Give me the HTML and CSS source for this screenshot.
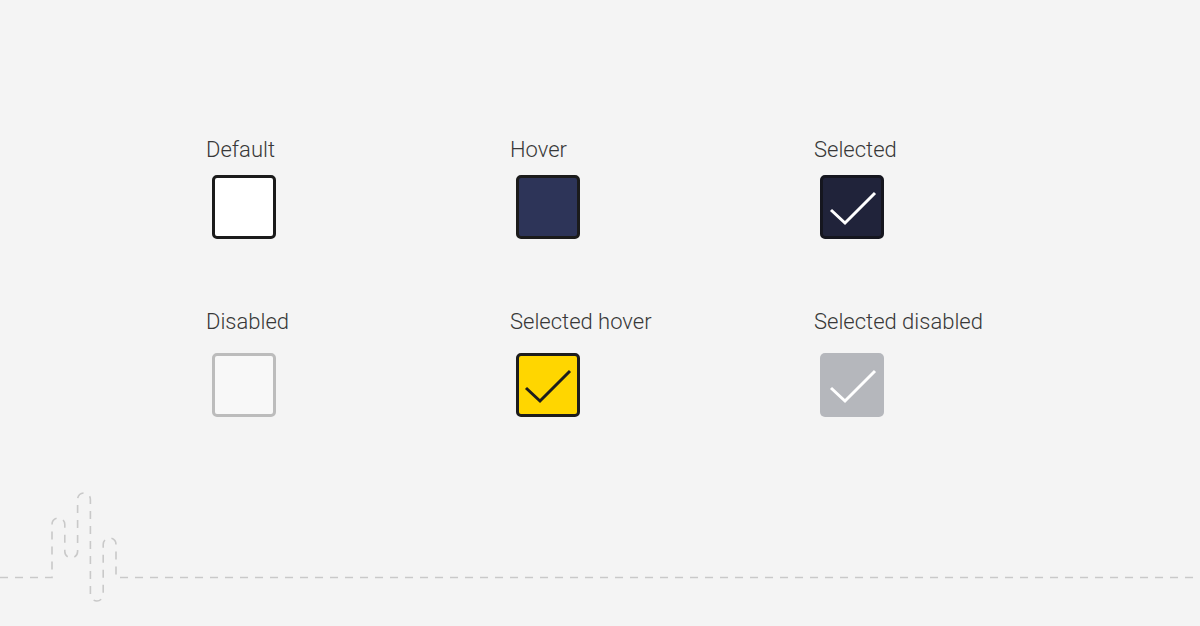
FILE: index.html
```html
<!DOCTYPE html>
<html>
<head>
<meta charset="utf-8">
<link rel="stylesheet" href="styles.css">
</head>
<body>
<main class="page">
  <section class="states">
    <div class="state row1">
      <div class="label">Default</div>
      <div class="box box-default"></div>
    </div>
    <div class="state row1">
      <div class="label">Hover</div>
      <div class="box box-hover"></div>
    </div>
    <div class="state row1">
      <div class="label">Selected</div>
      <div class="box box-selected">
        <svg class="check" viewBox="0 0 64 64"><polyline points="11,35 25,48 55,18" fill="none" stroke="#ffffff" stroke-width="3"/></svg>
      </div>
    </div>
    <div class="state row2">
      <div class="label">Disabled</div>
      <div class="box box-disabled"></div>
    </div>
    <div class="state row2">
      <div class="label">Selected hover</div>
      <div class="box box-selected-hover">
        <svg class="check" viewBox="0 0 64 64"><polyline points="10,35 24,48 54,18" fill="none" stroke="#1d1d1d" stroke-width="3"/></svg>
      </div>
    </div>
    <div class="state row2">
      <div class="label">Selected disabled</div>
      <div class="box box-selected-disabled">
        <svg class="check" viewBox="0 0 64 64"><polyline points="11,35 25,48 55,18" fill="none" stroke="#ffffff" stroke-width="3"/></svg>
      </div>
    </div>
  </section>
  <svg class="wave" viewBox="0 0 1200 146">
    <path d="M0 97.5 H52 V44.4 A6.4 6.4 0 0 1 64.8 44.4 V71.6 A6.4 6.4 0 0 0 77.6 71.6 V19.4 A6.4 6.4 0 0 1 90.4 19.4 V114.6 A6.4 6.4 0 0 0 103.2 114.6 V64.4 A6.4 6.4 0 0 1 116 64.4 V97.5 H1200" fill="none" stroke="#c9c9c9" stroke-width="1.6" stroke-dasharray="8 7"/>
  </svg>
</main>
</body>
</html>
```

FILE: styles.css
```css
html, body {
  margin: 0;
  padding: 0;
}
body {
  background: #f4f4f4;
  font-family: Roboto, "Liberation Sans", sans-serif;
  width: 1200px;
  height: 626px;
  overflow: hidden;
}
.page {
  position: relative;
  width: 1200px;
  height: 626px;
}
.states {
  display: grid;
  grid-template-columns: repeat(3, 304px);
  grid-template-rows: 172px auto;
  padding: 137px 0 0 206px;
}
.state {
  display: flex;
  flex-direction: column;
  align-items: flex-start;
}
.label {
  font-size: 22px;
  font-weight: 300;
  line-height: 26px;
  color: #383838;
}
.box {
  box-sizing: border-box;
  width: 64px;
  height: 64px;
  margin-left: 6px;
  border-radius: 5px;
  border: 3px solid #1b1b1b;
  position: relative;
}
.row1 .box { margin-top: 12px; }
.row2 .box { margin-top: 18px; }
.box-default { background: #ffffff; }
.box-hover { background: #2d3458; }
.box-selected { background: #20233a; border-color: #15161f; }
.box-disabled { background: #f8f8f8; border-color: #bcbcbc; }
.box-selected-hover { background: #ffd600; border-color: #1d1d1d; }
.box-selected-disabled { background: #b5b7bc; border: none; }
.check {
  position: absolute;
  left: -3px;
  top: -3px;
  width: 64px;
  height: 64px;
}
.box-selected-disabled .check { left: 0; top: 0; }
.wave {
  position: absolute;
  left: 0;
  top: 480px;
  width: 1200px;
  height: 146px;
}
```
